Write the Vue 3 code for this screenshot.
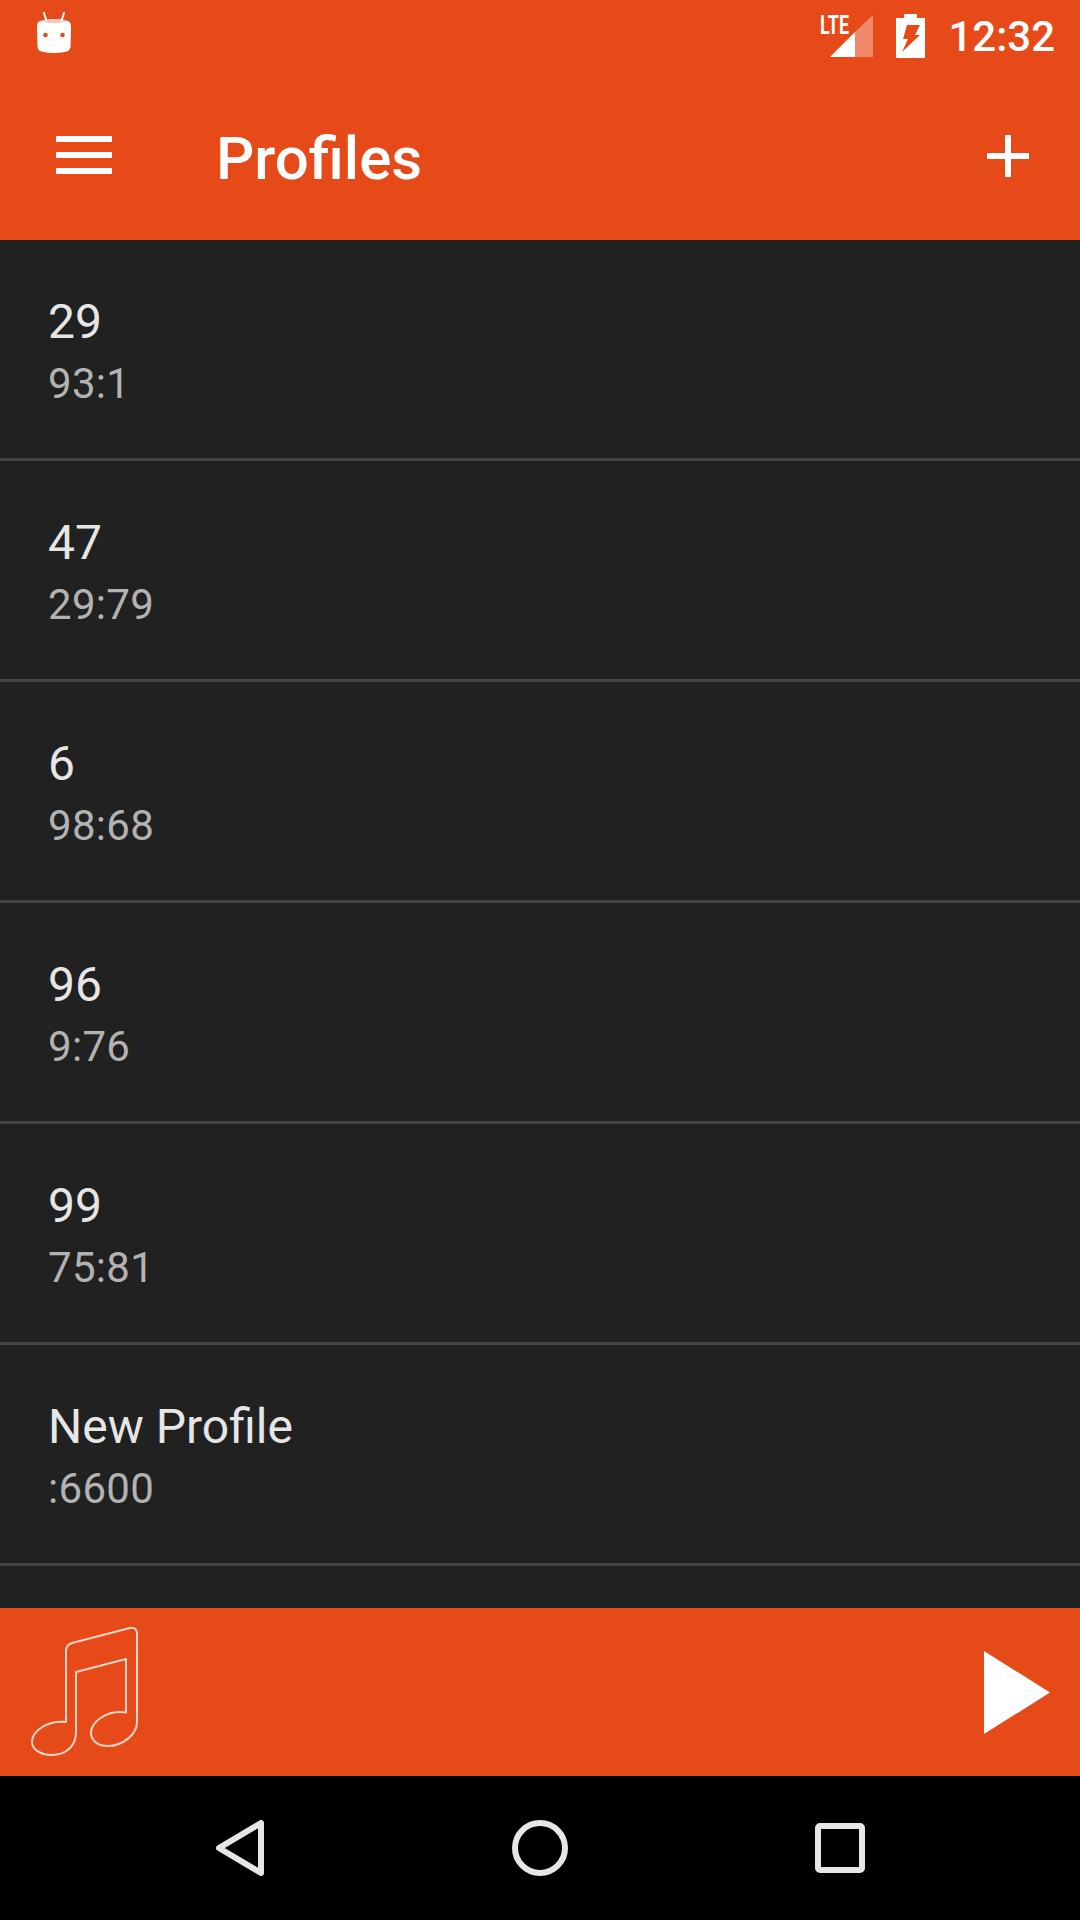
<script setup>
const profiles = [
  { name: '29', addr: '93:1' },
  { name: '47', addr: '29:79' },
  { name: '6', addr: '98:68' },
  { name: '96', addr: '9:76' },
  { name: '99', addr: '75:81' },
  { name: 'New Profile', addr: ':6600' },
]
</script>

<template>
  <div class="screen">
    <header class="header">
      <div class="status">
        <svg class="android" viewBox="0 0 34 41" width="34" height="41">
          <path d="M7 1 L9.500 9 M27 1 L24.500 9" stroke="#fff" stroke-width="2" stroke-linecap="round" fill="none" />
          <path d="M3 9 Q17 5 31 9 Q34 10 34 15 L33.500 35 Q33 39 28 40 Q17 42 6 40 Q1 39 .5 35 L0 15 Q0 10 3 9Z" fill="#fff" />
          <path d="M4 9.500 Q17 6 30 9.500 Q17 13 4 9.500Z" fill="#f8c9b6" />
          <circle cx="8.500" cy="23" r="2.300" fill="#e64a19" />
          <circle cx="25.500" cy="23" r="2.300" fill="#e64a19" />
        </svg>
        <div class="spacer"></div>
        <div class="signal">
          <span class="lte">LTE</span>
          <svg viewBox="0 0 43 43" width="43" height="43" class="bars">
            <path d="M0 42 L25 17 V42Z" fill="#fff" />
            <path d="M25 17 L43 0 V42 H25Z" fill="#fff" fill-opacity=".35" />
          </svg>
        </div>
        <svg class="battery" viewBox="0 0 29 44" width="29" height="44">
          <path fill-rule="evenodd" fill="#fff" d="M8 0 H21 V4 H29 V44 H0 V4 H8Z M11 11 H24 L19 21 H24 L6 38 L12 25 H7Z" />
        </svg>
        <span class="time">12:32</span>
      </div>
      <div class="toolbar">
        <div class="menu"><i></i><i></i><i></i></div>
        <h1 class="title">Profiles</h1>
        <div class="spacer"></div>
        <svg class="plus" viewBox="0 0 42 42" width="42" height="42">
          <path d="M18 0 H24 V18 H42 V24 H24 V42 H18 V24 H0 V18 H18Z" fill="#fff" />
        </svg>
      </div>
    </header>

    <main class="list">
      <div v-for="p in profiles" :key="p.name" class="row">
        <div class="name">{{ p.name }}</div>
        <div class="addr">{{ p.addr }}</div>
      </div>
    </main>

    <section class="player">
      <svg class="note" viewBox="0 0 110 130" width="110" height="130">
        <path
          d="M36 95 V24 Q36 18 42 16 L100 1 Q107 0 107 7 V95 C107 108 92 119 78 119 C66 119 61 112 61 106 C61 95 76 84 92 85 L96 85.500 V32 L46 45 V105 C46 119 36 128 22 128 C10 128 2 122 2 115 C2 105 16 93 36 95Z"
          fill="none" stroke="#f8d5c8" stroke-width="2" stroke-linejoin="round"
        />
      </svg>
      <div class="spacer"></div>
      <svg class="play" viewBox="0 0 66 83" width="66" height="83">
        <path d="M0 0 L66 41.500 L0 83Z" fill="#fff" />
      </svg>
    </section>

    <nav class="nav">
      <svg viewBox="0 0 48 56" width="48" height="56">
        <path d="M45 3 V53 L3 28Z" fill="none" stroke="#e6e6e6" stroke-width="6" stroke-linejoin="round" />
      </svg>
      <svg viewBox="0 0 56 56" width="56" height="56">
        <circle cx="28" cy="28" r="25" fill="none" stroke="#e6e6e6" stroke-width="6" />
      </svg>
      <svg viewBox="0 0 50 50" width="50" height="50">
        <rect x="3" y="3" width="44" height="44" rx="2" fill="none" stroke="#e6e6e6" stroke-width="6" />
      </svg>
    </nav>
  </div>
</template>

<style>
html, body { margin: 0; background: #212121; }
</style>

<style scoped>
.screen {
  width: 1080px;
  height: 1920px;
  display: flex;
  flex-direction: column;
  overflow: hidden;
  background: #212121;
  font-family: Roboto, "Liberation Sans", sans-serif;
}
.spacer { flex: 1; }
.header { background: #e64a19; color: #fff; height: 240px; flex: none; }
.status {
  height: 72px;
  display: flex;
  align-items: flex-start;
  padding: 0 25px 0 37px;
  box-sizing: border-box;
}
.android { margin-top: 12px; }
.signal { position: relative; width: 53px; height: 43px; margin: 15px -2px 0 0; }
.lte {
  position: absolute;
  left: 0;
  top: -1px;
  font-size: 25px;
  line-height: 24px;
  font-weight: 700;
  transform: scaleX(.72);
  transform-origin: left top;
}
.bars { position: absolute; right: 0; top: 0; }
.battery { margin: 14px 0 0 25px; }
.time { margin: 12px 0 0 23px; font-size: 42px; line-height: 50px; font-weight: 500; }
.toolbar {
  height: 168px;
  display: flex;
  align-items: center;
  padding: 0 51px 0 56px;
  box-sizing: border-box;
}
.menu { width: 56px; display: flex; flex-direction: column; gap: 10px; margin-top: -2px; }
.menu i { display: block; height: 6px; background: #fff; }
.title { margin: 6px 0 0 104px; font-size: 60px; line-height: 80px; font-weight: 500; }
.list { flex: 1; overflow: hidden; min-height: 0; }
.row {
  height: 221px;
  box-sizing: border-box;
  border-bottom: 3px solid #444;
  padding: 50px 48px 0;
}
.name { font-size: 48px; line-height: 64px; color: #e6e6e6; }
.addr { margin-top: 2px; font-size: 42px; line-height: 56px; color: #b3b3b3; letter-spacing: .3px; }
.player {
  height: 168px;
  flex: none;
  background: #e64a19;
  display: flex;
  align-items: center;
  padding: 0 30px 0 30px;
  box-sizing: border-box;
}
.nav {
  height: 144px;
  flex: none;
  background: #000;
  display: flex;
  align-items: center;
  padding-left: 216px;
}
.nav svg:nth-child(2) { margin-left: 248px; }
.nav svg:nth-child(3) { margin-left: 247px; }
</style>
